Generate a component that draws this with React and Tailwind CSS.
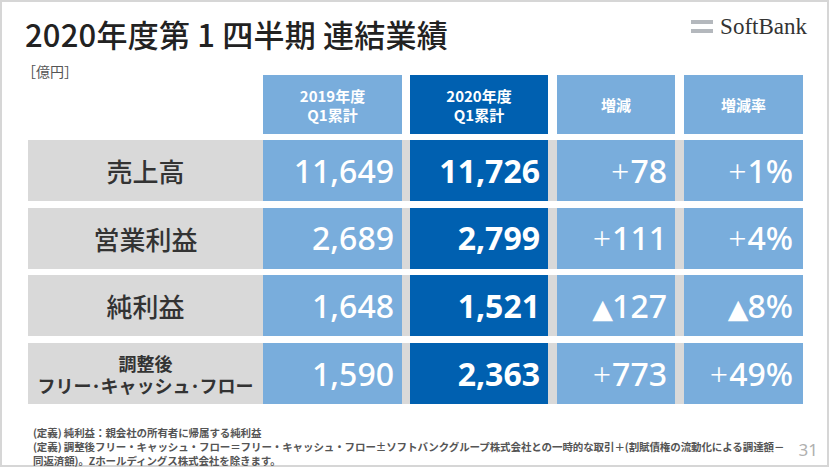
const jp = { fontFamily: '"Noto Sans CJK JP", "Noto Sans", sans-serif' };
const num = { fontFamily: '"Noto Sans", "Noto Sans CJK JP", sans-serif' };

const rows = [
  { label: "売上高", a: "11,649", b: "11,726", c: ["+", "78"], d: ["+", "1%"] },
  { label: "営業利益", a: "2,689", b: "2,799", c: ["+", "111"], d: ["+", "4%"] },
  { label: "純利益", a: "1,648", b: "1,521", c: ["▲", "127"], d: ["▲", "8%"] },
  { label: null, a: "1,590", b: "2,363", c: ["+", "773"], d: ["+", "49%"] },
];

const SoftBankLogo = () => (
  <div className="flex items-center gap-[7px]">
    <svg width="22" height="14" viewBox="0 0 22 14">
      <rect x="0" y="0" width="22" height="4" fill="#b4b8bd" />
      <rect x="0" y="9" width="22" height="4" fill="#b4b8bd" />
    </svg>
    <span
      className="text-[23px] leading-none text-[#333]"
      style={{ fontFamily: '"Liberation Serif", serif' }}
    >
      SoftBank
    </span>
  </div>
);

export default function App() {
  return (
    <div className="w-[830px] h-[468px] bg-white">
      <div className="relative w-[829px] h-[467px] border-2 border-[#d6d6d6] pl-[23px] pr-[22px]" style={jp}>
        {/* title */}
        <div className="flex items-start justify-between pt-[12px]">
          <h1 className="text-[31px] leading-[40px] font-medium text-[#222] tracking-[0.2px]">
            2020年度第 1 四半期 連結業績
          </h1>
          <div className="pt-[1px] mr-[-2px]">
            <SoftBankLogo />
          </div>
        </div>

        {/* table */}
        <div className="ml-[3px] w-[775px]">
          {/* header */}
          <div className="flex h-[59px] mt-[21px]">
            <div className="w-[235px] relative">
              <span className="absolute left-[-6px] top-[-14px] text-[14px] text-[#555]">［億円］</span>
            </div>
            <HeadCell w="w-[139px]" bg="bg-[#79addc]" t1="2019年度" t2="Q1累計" />
            <div className="w-[8px]" />
            <HeadCell w="w-[138px]" bg="bg-[#0060b0]" t1="2020年度" t2="Q1累計" />
            <div className="w-[9px]" />
            <HeadCell w="w-[118px]" bg="bg-[#79addc]" t1="増減" />
            <div className="w-[9px]" />
            <HeadCell w="w-[119px]" bg="bg-[#79addc]" t1="増減率" />
          </div>

          <div className="flex flex-col gap-[6.7px] mt-[6px]">
            {rows.map((r, i) => (
              <div key={i} className="flex h-[61px] bg-[#d9d9d9]">
                <div className="w-[235px] flex flex-col items-center justify-center text-[#333]">
                  {r.label ? (
                    <span className="text-[26px] font-medium">{r.label}</span>
                  ) : (
                    <p className="text-[18px] leading-[22px] font-bold text-center">
                      調整後
                      <br />
                      フリー･キャッシュ･フロー
                    </p>
                  )}
                </div>
                <Cell w="w-[139px]" bg="bg-[#79addc]" v={r.a} />
                <div className="w-[8px]" />
                <Cell w="w-[138px]" bg="bg-[#0060b0]" v={r.b} bold />
                <div className="w-[9px]" />
                <Cell w="w-[118px]" bg="bg-[#79addc]" sign={r.c[0]} v={r.c[1]} />
                <div className="w-[9px]" />
                <Cell w="w-[119px]" bg="bg-[#79addc]" sign={r.d[0]} v={r.d[1]} pr="pr-[10px]" />
              </div>
            ))}
          </div>
        </div>

        {/* footnotes */}
        <div className="mt-[22px] ml-[8px] text-[10.5px] leading-[14px] font-bold text-[#555] tracking-[-0.1px] whitespace-nowrap">
          <p>(定義) 純利益：親会社の所有者に帰属する純利益</p>
          <p>(定義) 調整後フリー・キャッシュ・フロー＝フリー・キャッシュ・フロー±ソフトバンクグループ株式会社との一時的な取引＋(割賦債権の流動化による調達額－</p>
          <p>同返済額)。Zホールディングス株式会社を除きます。</p>
        </div>

        <span className="absolute right-[9px] bottom-[5px] text-[17px] leading-[20px] text-[#b0b0b0]" style={num}>31</span>
      </div>
    </div>
  );
}

function HeadCell({ w, bg, t1, t2 }) {
  return (
    <div className={`${w} ${bg} flex flex-col items-center justify-center text-white text-[15px] leading-[19px] font-bold`}>
      <span>{t1}</span>
      {t2 && <span>{t2}</span>}
    </div>
  );
}

function Cell({ w, bg, v, sign, bold, pr = "pr-[8px]" }) {
  return (
    <div
      className={`${w} ${bg} flex items-center justify-end ${pr} text-white text-[32px] ${bold ? "font-bold" : "font-medium"}`}
      style={num}
    >
      <span className="whitespace-nowrap">
        {sign === "+" && <span className="font-light mr-[1px]">+</span>}
        {sign === "▲" && (
          <span className="text-[27px] mr-[-1px]" style={{ fontFamily: '"DejaVu Sans", sans-serif' }}>
            ▲
          </span>
        )}
        {v}
      </span>
    </div>
  );
}
